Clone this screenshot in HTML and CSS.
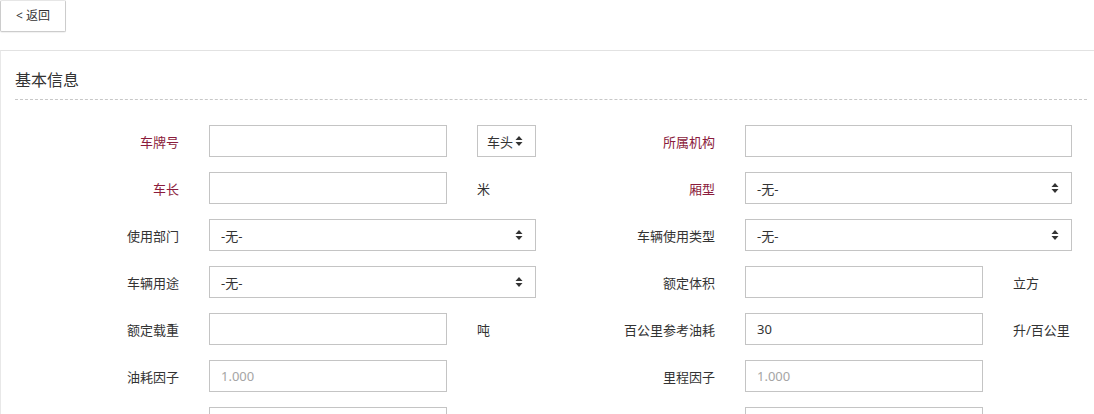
FILE: index.html
```html
<!DOCTYPE html>
<html lang="zh-CN">
<head>
<meta charset="utf-8">
<title>车辆信息</title>
<link rel="stylesheet" href="styles.css">
</head>
<body>
<div class="toolbar">
  <button class="btn-back" type="button">&lt; 返回</button>
</div>
<div class="panel">
  <div class="panel-head">基本信息</div>
  <form class="form-grid">
    <label class="lbl req">车牌号</label>
    <input class="ctl" type="text">
    <div class="sel sel-sm"><span>车头</span><svg class="caret" viewBox="0 0 8 12" width="8" height="12"><path d="M4 1 L7.5 5 H0.5 Z M4 11 L7.5 7 H0.5 Z" fill="#333"/></svg></div>
    <label class="lbl req">所属机构</label>
    <input class="ctl span2" type="text">

    <label class="lbl req">车长</label>
    <input class="ctl" type="text">
    <span class="unit">米</span>
    <label class="lbl req">厢型</label>
    <div class="sel span2"><span>-无-</span><svg class="caret" viewBox="0 0 8 12" width="8" height="12"><path d="M4 1 L7.5 5 H0.5 Z M4 11 L7.5 7 H0.5 Z" fill="#333"/></svg></div>

    <label class="lbl">使用部门</label>
    <div class="sel span2"><span>-无-</span><svg class="caret" viewBox="0 0 8 12" width="8" height="12"><path d="M4 1 L7.5 5 H0.5 Z M4 11 L7.5 7 H0.5 Z" fill="#333"/></svg></div>
    <label class="lbl">车辆使用类型</label>
    <div class="sel span2"><span>-无-</span><svg class="caret" viewBox="0 0 8 12" width="8" height="12"><path d="M4 1 L7.5 5 H0.5 Z M4 11 L7.5 7 H0.5 Z" fill="#333"/></svg></div>

    <label class="lbl">车辆用途</label>
    <div class="sel span2"><span>-无-</span><svg class="caret" viewBox="0 0 8 12" width="8" height="12"><path d="M4 1 L7.5 5 H0.5 Z M4 11 L7.5 7 H0.5 Z" fill="#333"/></svg></div>
    <label class="lbl">额定体积</label>
    <input class="ctl" type="text">
    <span class="unit">立方</span>

    <label class="lbl">额定载重</label>
    <input class="ctl" type="text">
    <span class="unit">吨</span>
    <label class="lbl">百公里参考油耗</label>
    <input class="ctl" type="text" value="30">
    <span class="unit">升/百公里</span>

    <label class="lbl">油耗因子</label>
    <input class="ctl" type="text" placeholder="1.000">
    <span class="unit"></span>
    <label class="lbl">里程因子</label>
    <input class="ctl" type="text" placeholder="1.000">
    <span class="unit"></span>

    <span class="lbl"></span>
    <input class="ctl" type="text">
    <span class="unit"></span>
    <span class="lbl"></span>
    <input class="ctl" type="text">
    <span class="unit"></span>
  </form>
</div>
</body>
</html>
```

FILE: styles.css
```css
html, body {
  margin: 0;
  padding: 0;
  overflow: hidden;
  background: #fff;
}
body {
  font-family: "Noto Sans", "Noto Sans CJK SC", sans-serif;
  font-size: 13px;
  color: #333;
}
.toolbar {
  height: 50px;
}
.btn-back {
  display: block;
  width: 66px;
  height: 32px;
  margin: 0;
  padding: 0 0 2px 0;
  border: 1px solid #ccc;
  border-top-color: #e6e6e6;
  border-radius: 2px;
  background: #fff;
  color: #333;
  font-family: inherit;
  font-size: 12px;
  text-align: center;
  box-shadow: 0 1px 1px rgba(0,0,0,0.06);
}
.panel {
  border-top: 1px solid #e2e2e2;
  border-left: 1px solid #e8e8e8;
  padding: 0 7px 0 14px;
}
.panel-head {
  font-size: 16px;
  color: #333;
  height: 48px;
  line-height: 58px;
  border-bottom: 1px dashed #c8c8c8;
}
.form-grid {
  display: grid;
  grid-template-columns: 164px 238px 59px 149px 238px 59px;
  column-gap: 30px;
  row-gap: 15px;
  grid-auto-rows: 32px;
  margin-top: 25px;
}
.lbl {
  display: flex;
  align-items: center;
  justify-content: flex-end;
  color: #333;
  white-space: nowrap;
}
.lbl.req {
  color: #8b1c3c;
}
.ctl {
  box-sizing: border-box;
  height: 32px;
  width: 100%;
  margin: 0;
  border: 1px solid #c4c4c4;
  border-radius: 0;
  padding: 0 11px;
  font-family: inherit;
  font-size: 13px;
  color: #333;
  background: #fff;
  outline: none;
}
.ctl::placeholder {
  color: #a5a5a5;
}
.span2 {
  grid-column: span 2;
}
.sel {
  box-sizing: border-box;
  height: 32px;
  border: 1px solid #c4c4c4;
  padding: 0 12px 0 11px;
  display: flex;
  align-items: center;
  justify-content: space-between;
  background: #fff;
}
.sel-sm {
  padding-left: 9px;
}
.caret {
  display: block;
  width: 8px;
  height: 12px;
}
.unit {
  display: flex;
  align-items: center;
  white-space: nowrap;
}
```
